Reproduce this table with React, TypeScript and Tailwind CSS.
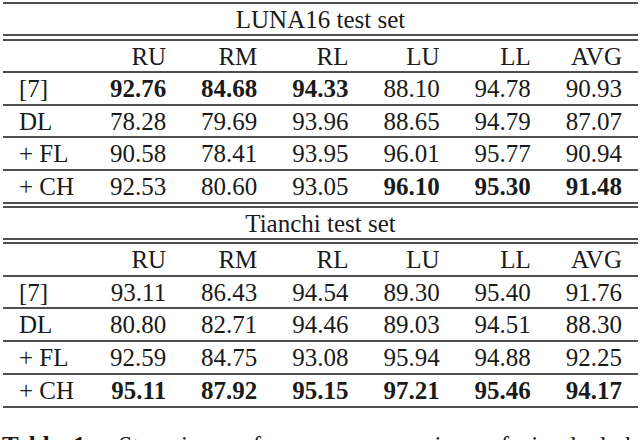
import React from "react";

type Row = { label: string; values: string[]; bold: boolean[] };

const cols = ["RU", "RM", "RL", "LU", "LL", "AVG"];

const luna: Row[] = [
  { label: "[7]", values: ["92.76", "84.68", "94.33", "88.10", "94.78", "90.93"], bold: [true, true, true, false, false, false] },
  { label: "DL", values: ["78.28", "79.69", "93.96", "88.65", "94.79", "87.07"], bold: [false, false, false, false, false, false] },
  { label: "+ FL", values: ["90.58", "78.41", "93.95", "96.01", "95.77", "90.94"], bold: [false, false, false, false, false, false] },
  { label: "+ CH", values: ["92.53", "80.60", "93.05", "96.10", "95.30", "91.48"], bold: [false, false, false, true, true, true] },
];

const tianchi: Row[] = [
  { label: "[7]", values: ["93.11", "86.43", "94.54", "89.30", "95.40", "91.76"], bold: [false, false, false, false, false, false] },
  { label: "DL", values: ["80.80", "82.71", "94.46", "89.03", "94.51", "88.30"], bold: [false, false, false, false, false, false] },
  { label: "+ FL", values: ["92.59", "84.75", "93.08", "95.94", "94.88", "92.25"], bold: [false, false, false, false, false, false] },
  { label: "+ CH", values: ["95.11", "87.92", "95.15", "97.21", "95.46", "94.17"], bold: [true, true, true, true, true, true] },
];

const Rule: React.FC = () => <div className="h-[2px] bg-[#505050]" />;

const DoubleRule: React.FC<{ wide?: boolean }> = ({ wide }) => (
  <div className={wide ? "flex flex-col gap-[3px]" : "flex flex-col gap-[2px]"}>
    <Rule />
    <Rule />
  </div>
);

const grid = "grid grid-cols-[56px_repeat(6,1fr)] items-center pl-[16px] pr-[16px]";

const HeaderRow: React.FC<{ tall?: boolean }> = ({ tall }) => (
  <div className={`${grid} ${tall ? "h-[31px]" : "h-[30px]"}`}>
    <span />
    {cols.map((c) => (
      <span key={c} className="text-right">
        {c}
      </span>
    ))}
  </div>
);

const DataRow: React.FC<{ row: Row; tall: boolean }> = ({ row, tall }) => (
  <div className={`${grid} ${tall ? "h-[31px]" : "h-[30px]"}`}>
    <span>{row.label}</span>
    {row.values.map((v, i) => (
      <span key={i} className={row.bold[i] ? "text-right font-bold" : "text-right"}>
        {v}
      </span>
    ))}
  </div>
);

const Section: React.FC<{ title: string; rows: Row[]; heights: boolean[]; first?: boolean }> = ({
  title,
  rows,
  heights,
  first,
}) => (
  <>
    <div className="flex h-[30px] items-center justify-center">{title}</div>
    <DoubleRule wide={first} />
    <HeaderRow tall={!first} />
    {rows.map((r, i) => (
      <React.Fragment key={r.label}>
        <Rule />
        <DataRow row={r} tall={heights[i]} />
      </React.Fragment>
    ))}
  </>
);

export default function App() {
  return (
    <div
      className="h-[440px] w-[640px] overflow-hidden bg-white pl-[3px] pr-[2px] pt-[2px] text-[25px] leading-none text-[#1a1a1a]"
      style={{ fontFamily: '"Liberation Serif", "Times New Roman", serif' }}
    >
      <Rule />
      <Section title="LUNA16 test set" rows={luna} heights={[true, false, true, true]} first />
      <DoubleRule />
      <Section title="Tianchi test set" rows={tianchi} heights={[false, true, true, true]} />
      <Rule />
      <p className="-ml-[1px] mt-[25px] whitespace-nowrap [word-spacing:6px]">
        <span className="font-bold">Table 1:</span>&nbsp;&nbsp;Stepwise performance comparison of simple hybrid
      </p>
    </div>
  );
}
